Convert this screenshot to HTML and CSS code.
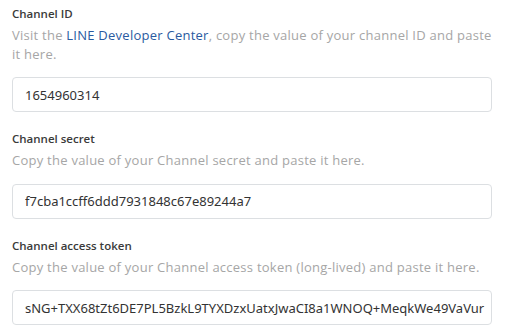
FILE: index.html
```html
<!DOCTYPE html>
<html lang="en">
<head>
<meta charset="utf-8">
<title>LINE channel settings</title>
<link rel="stylesheet" href="styles.css">
</head>
<body>
<form class="form">
  <div class="field">
    <label class="label" for="cid">Channel ID</label>
    <p class="help">Visit the <a class="link" href="#">LINE Developer Center</a>, copy the value of your channel ID and paste it here.</p>
    <input class="input" id="cid" type="text" value="1654960314">
  </div>
  <div class="field">
    <label class="label" for="csecret">Channel secret</label>
    <p class="help">Copy the value of your Channel secret and paste it here.</p>
    <input class="input" id="csecret" type="text" value="f7cba1ccff6ddd7931848c67e89244a7">
  </div>
  <div class="field">
    <label class="label" for="ctoken">Channel access token</label>
    <p class="help">Copy the value of your Channel access token (long-lived) and paste it here.</p>
    <input class="input" id="ctoken" type="text" value="sNG+TXX68tZt6DE7PL5BzkL9TYXDzxUatxJwaCI8a1WNOQ+MeqkWe49VaVur">
  </div>
</form>
</body>
</html>
```

FILE: styles.css
```css
html, body {
  margin: 0;
  padding: 0;
  background: #ffffff;
}
.form {
  width: 480px;
  padding: 5px 0 0 12px;
  display: flex;
  flex-direction: column;
  gap: 18px;
}
.field {
  display: flex;
  flex-direction: column;
}
.label {
  font-family: "Open Sans", "Noto Sans", sans-serif;
  font-weight: 600;
  font-size: 11.5px;
  line-height: 18px;
  color: #3a3a3a;
}
.help {
  margin: 3px 0 0;
  font-family: "Open Sans", "Noto Sans", sans-serif;
  font-size: 13px;
  letter-spacing: 0.25px;
  line-height: 18.5px;
  color: #a6a6a6;
}
.link {
  color: #2a5aa0;
  text-decoration: none;
}
.input {
  margin-top: 14px;
  box-sizing: border-box;
  width: 480px;
  height: 35px;
  padding: 0 4px 0 12px;
  border: 1px solid #dcdfe2;
  border-radius: 4px;
  font-family: "Noto Sans", "Open Sans", sans-serif;
  font-size: 13px;
  color: #333333;
  background: #ffffff;
  outline: none;
}
```
